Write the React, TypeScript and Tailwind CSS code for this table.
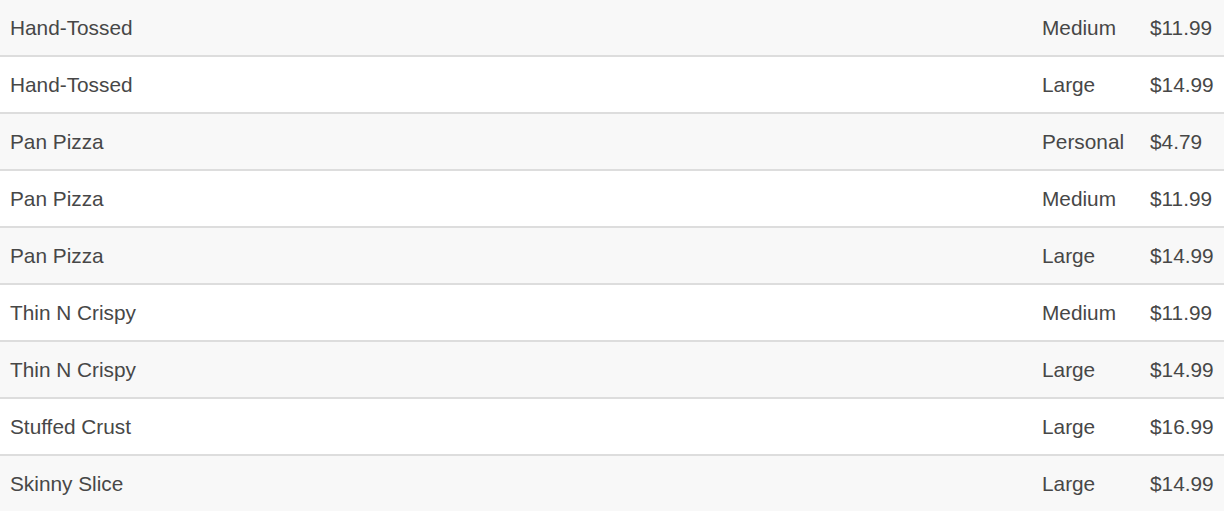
import React from 'react';

const rows = [
  { name: 'Hand-Tossed', size: 'Medium', price: '$11.99' },
  { name: 'Hand-Tossed', size: 'Large', price: '$14.99' },
  { name: 'Pan Pizza', size: 'Personal', price: '$4.79' },
  { name: 'Pan Pizza', size: 'Medium', price: '$11.99' },
  { name: 'Pan Pizza', size: 'Large', price: '$14.99' },
  { name: 'Thin N Crispy', size: 'Medium', price: '$11.99' },
  { name: 'Thin N Crispy', size: 'Large', price: '$14.99' },
  { name: 'Stuffed Crust', size: 'Large', price: '$16.99' },
  { name: 'Skinny Slice', size: 'Large', price: '$14.99' },
];

export default function App() {
  return (
    <div className="w-[1224px] bg-white font-['Liberation_Sans',Arial,sans-serif] text-[20.8px] text-[#474747]">
      {rows.map((row, i) => (
        <div
          key={i}
          className={`flex h-[57px] items-center border-b-2 border-[#ddd] ${
            i % 2 === 0 ? 'bg-[#f8f8f8]' : 'bg-white'
          }`}
        >
          <div className="flex-1 px-[10px]">{row.name}</div>
          <div className="w-[108px] px-[10px]">{row.size}</div>
          <div className="w-[84px] px-[10px]">{row.price}</div>
        </div>
      ))}
    </div>
  );
}
